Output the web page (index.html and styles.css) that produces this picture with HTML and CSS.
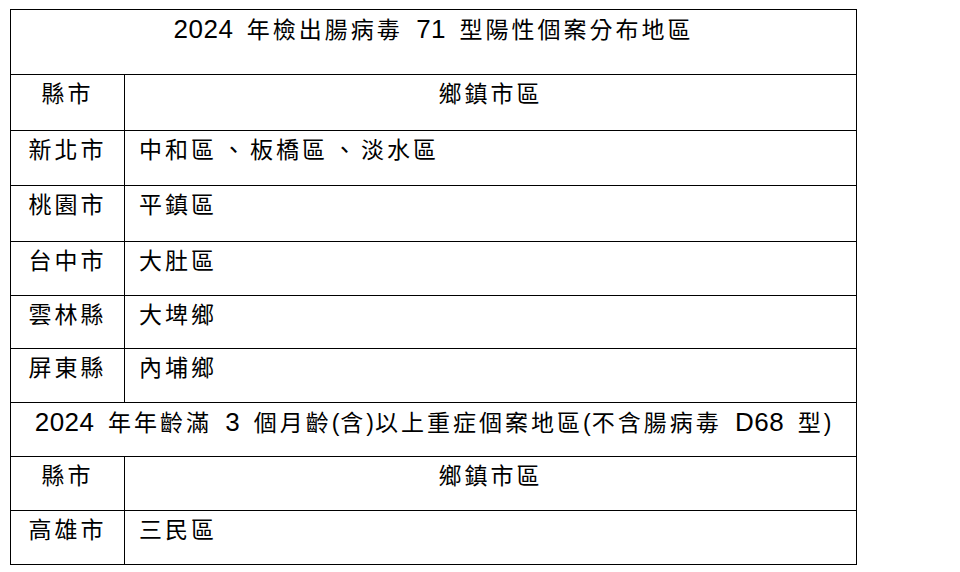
FILE: index.html
```html
<!DOCTYPE html>
<html lang="zh-Hant">
<head>
<meta charset="utf-8">
<link rel="stylesheet" href="styles.css">
<title>腸病毒個案分布地區</title>
</head>
<body>
<table class="area-table">
  <colgroup>
    <col class="col-city">
    <col class="col-town">
  </colgroup>
  <tr class="row-title-first">
    <td colspan="2" class="title"><span class="num">2024</span> 年檢出腸病毒 <span class="num">71</span> 型陽性個案分布地區</td>
  </tr>
  <tr class="row-head">
    <td class="city">縣市</td>
    <td class="town-head">鄉鎮市區</td>
  </tr>
  <tr class="row-a">
    <td class="city">新北市</td>
    <td class="town">中和區<span class="dun">、</span>板橋區<span class="dun">、</span>淡水區</td>
  </tr>
  <tr class="row-b">
    <td class="city">桃園市</td>
    <td class="town">平鎮區</td>
  </tr>
  <tr class="row-c">
    <td class="city">台中市</td>
    <td class="town">大肚區</td>
  </tr>
  <tr class="row-d">
    <td class="city">雲林縣</td>
    <td class="town">大埤鄉</td>
  </tr>
  <tr class="row-c">
    <td class="city">屏東縣</td>
    <td class="town">內埔鄉</td>
  </tr>
  <tr class="row-c">
    <td colspan="2" class="title"><span class="num">2024</span> 年年齡滿 <span class="num">3</span> 個月齡<span class="paren">(</span>含<span class="paren">)</span>以上重症個案地區<span class="paren">(</span>不含腸病毒 <span class="num">D68</span> 型<span class="paren">)</span></td>
  </tr>
  <tr class="row-c">
    <td class="city">縣市</td>
    <td class="town-head">鄉鎮市區</td>
  </tr>
  <tr class="row-c">
    <td class="city">高雄市</td>
    <td class="town">三民區</td>
  </tr>
</table>
</body>
</html>
```

FILE: styles.css
```css
html, body {
  margin: 0;
  padding: 0;
  background: #ffffff;
}

body {
  padding: 9px 0 0 10px;
  font-family: "Liberation Sans", "Noto Sans CJK TC", sans-serif;
  color: #000000;
}

.area-table {
  border-collapse: collapse;
  table-layout: fixed;
  width: 846px;
  font-size: 23px;
  letter-spacing: 3px;
}

.col-city { width: 114px; }
.col-town { width: 732px; }

.area-table td {
  border: 1px solid #000000;
  vertical-align: top;
  padding: 4px 0 0 0;
  line-height: 30px;
  white-space: nowrap;
}

.row-title-first { height: 65px; }
.row-head { height: 56px; }
.row-a { height: 55px; }
.row-b { height: 56px; }
.row-c { height: 54px; }
.row-d { height: 53px; }

.title {
  text-align: center;
  word-spacing: 4px;
}

.num {
  font-size: 26px;
  letter-spacing: 0.5px;
}

.paren {
  letter-spacing: 1px;
}

.dun {
  padding-left: 5px;
  letter-spacing: 5px;
}

.city {
  text-align: center;
}

.town-head {
  text-align: center;
}

.town {
  padding-left: 14px !important;
}
```
